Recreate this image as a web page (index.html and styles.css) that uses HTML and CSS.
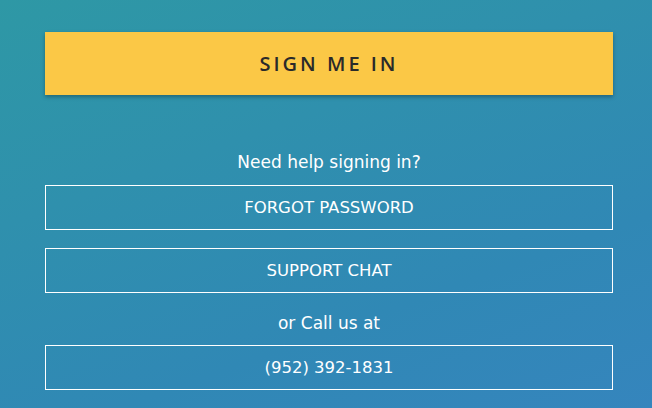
FILE: index.html
```html
<!DOCTYPE html>
<html lang="en">
<head>
    <meta charset="UTF-8">
    <meta name="viewport" content="width=device-width, initial-scale=1.0">
    <title>Sign In</title>
    <link rel="stylesheet" href="styles.css">
</head>
<body>
    <div class="login-panel">
        <button class="btn-signin" type="button">Sign me in</button>

        <div class="help">
            <p class="help-text">Need help signing in?</p>
            <a class="btn-outline" href="#">FORGOT PASSWORD</a>
            <a class="btn-outline" href="#">SUPPORT CHAT</a>
            <p class="help-text call">or Call us at</p>
            <a class="btn-outline" href="#">(952) 392-1831</a>
        </div>
    </div>
</body>
</html>
```

FILE: styles.css
```css
body {
    margin: 0;
    height: 408px;
    overflow: hidden;
    background: linear-gradient(160deg, #2e98a5 0%, #3088b5 70%, #3585bd 100%);
    font-family: 'DejaVu Sans', 'Noto Sans', sans-serif;
    color: #fff;
}

.login-panel {
    width: 568px;
    margin-left: 45px;
    padding-top: 32px;
    display: flex;
    flex-direction: column;
}

.btn-signin {
    height: 63px;
    border: 0;
    background: #fbc846;
    color: #2a2a2a;
    font-family: 'Open Sans', sans-serif;
    font-size: 20px;
    font-weight: 600;
    letter-spacing: 3px;
    text-transform: uppercase;
    box-shadow: 0 2px 4px rgba(0, 0, 0, 0.3);
    cursor: pointer;
}

.help {
    margin-top: 55px;
    display: flex;
    flex-direction: column;
}

.help-text {
    margin: 0 0 10px;
    text-align: center;
    font-size: 17px;
    line-height: 25px;
}

.help-text.call {
    margin: 18px 0 9px;
}

.btn-outline {
    display: flex;
    align-items: center;
    justify-content: center;
    height: 43px;
    border: 1px solid #fff;
    color: #fff;
    text-decoration: none;
    font-size: 16.5px;
}

.btn-outline + .btn-outline {
    margin-top: 18px;
}
```
